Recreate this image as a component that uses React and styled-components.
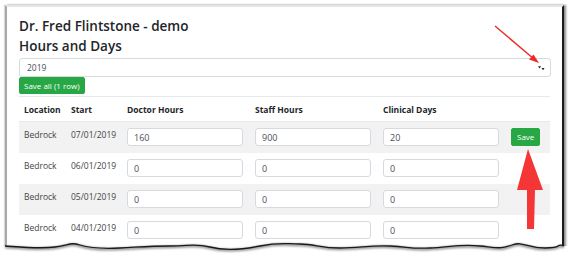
import styled, { createGlobalStyle } from "styled-components";

const GlobalStyle = createGlobalStyle`
  html, body {
    margin: 0;
    padding: 0;
    background: #fff;
  }
  body {
    font-family: "Open Sans", "Liberation Sans", sans-serif;
    color: #212529;
  }
`;

const rows = [
  { location: "Bedrock", start: "07/01/2019", doctor: "160", staff: "900", days: "20", dirty: true },
  { location: "Bedrock", start: "06/01/2019", doctor: "0", staff: "0", days: "0" },
  { location: "Bedrock", start: "05/01/2019", doctor: "0", staff: "0", days: "0" },
  { location: "Bedrock", start: "04/01/2019", doctor: "0", staff: "0", days: "0" },
];

const App = () => {
  return (
    <Page>
      <GlobalStyle />
      <Frame>
        <Title>
          Dr. Fred Flintstone - demo
          <br />
          Hours and Days
        </Title>

        <YearSelect>
          <span>2019</span>
          <SelectCaret viewBox="0 0 8 6">
            <path d="M0 1h3.5L1.75 3.5z M4 3h3.5L5.75 5.5z" fill="#222" />
          </SelectCaret>
        </YearSelect>

        <GreenButton $small>Save all (1 row)</GreenButton>

        <Table>
          <thead>
            <tr>
              <Th $w={47}>Location</Th>
              <Th $w={56}>Start</Th>
              <Th $w={128}>Doctor Hours</Th>
              <Th $w={128}>Staff Hours</Th>
              <Th $w={128}>Clinical Days</Th>
              <Th $w={44}></Th>
            </tr>
          </thead>
          <tbody>
            {rows.map((r, i) => (
              <Row key={r.start} $striped={i % 2 === 0}>
                <Td>{r.location}</Td>
                <Td>{r.start}</Td>
                <Td><NumInput defaultValue={r.doctor} /></Td>
                <Td><NumInput defaultValue={r.staff} /></Td>
                <Td><NumInput defaultValue={r.days} /></Td>
                <Td>{r.dirty && <GreenButton>Save</GreenButton>}</Td>
              </Row>
            ))}
          </tbody>
        </Table>
      </Frame>

      <Overlay viewBox="0 0 574 260">
        <defs>
          <filter id="blur" x="-5%" y="-50%" width="110%" height="200%">
            <feGaussianBlur stdDeviation="1.2" />
          </filter>
        </defs>
        {/* torn bottom edge */}
        <path
          d="M0 246 L5 246 C20 247 40 249 55 247 S70 242 80 245 S100 249 120 248 S150 246 170 246 S195 243 210 247 S240 250 260 246 S285 244 300 244 S320 248 340 248 S370 245 390 246 S410 249 430 248 S460 244 480 246 S500 249 512 245 S525 248 545 248 S555 243 564 246 L574 246 L574 260 L0 260 Z"
          fill="#fff"
        />
        <path
          d="M5 247 C20 248 40 250 55 248 S70 243 80 246 S100 250 120 249 S150 247 170 247 S195 244 210 248 S240 251 260 247 S285 245 300 245 S320 249 340 249 S370 246 390 247 S410 250 430 249 S460 245 480 247 S500 250 512 246 S525 249 545 249 S555 244 564 247"
          fill="none"
          stroke="#000"
          strokeOpacity="0.45"
          strokeWidth="2.5"
          filter="url(#blur)"
        />
        <path
          d="M5 246 C20 247 40 249 55 247 S70 242 80 245 S100 249 120 248 S150 246 170 246 S195 243 210 247 S240 250 260 246 S285 244 300 244 S320 248 340 248 S370 245 390 246 S410 249 430 248 S460 244 480 246 S500 249 512 245 S525 248 545 248 S555 243 564 246"
          fill="none"
          stroke="#1a1a1a"
          strokeWidth="1.3"
        />

        {/* thin arrow to the select caret */}
        <line x1="495" y1="26" x2="534" y2="59" stroke="#ec2a2a" strokeWidth="1.4" />
        <path d="M539 63 L529 59.5 L533.5 54.5 Z" fill="#ec2a2a" />

        {/* big arrow to the save button */}
        <path d="M528 149 L543 190 L535 190 L534 229 L527 229 L527 190 L517 190 Z" fill="#f43636" />
      </Overlay>
    </Page>
  );
};

const Page = styled.div`
  position: relative;
  width: 574px;
  height: 260px;
  overflow: hidden;
  padding: 5px 0 0 5px;
  box-sizing: border-box;
`;

const Frame = styled.div`
  box-sizing: border-box;
  width: 559px;
  height: 248px;
  overflow: hidden;
  padding: 9px 11px 0 12px;
  background: #fff;
  border-top: 2px solid #e6e6e6;
  border-left: 2px solid #a8a8a8;
  border-right: 2px solid #1c1c1c;
  box-shadow: 2px 0 2px rgba(0, 0, 0, 0.45), -1px 0 1px rgba(0, 0, 0, 0.15);
`;

const Title = styled.h1`
  margin: 0;
  font-size: 13.5px;
  font-weight: 600;
  line-height: 20px;
  color: #212529;
`;

const YearSelect = styled.div`
  box-sizing: border-box;
  margin-top: 2px;
  height: 19px;
  display: flex;
  align-items: center;
  justify-content: space-between;
  padding: 0 5px 0 7px;
  border: 1px solid #d6dadf;
  border-radius: 3px;
  font-size: 8.5px;
  color: #495057;
`;

const SelectCaret = styled.svg`
  width: 7px;
  height: 6px;
`;

const GreenButton = styled.button`
  box-sizing: border-box;
  display: block;
  height: ${(p) => (p.$small ? "17px" : "18px")};
  padding: 0 ${(p) => (p.$small ? "4px" : "5px")};
  border: 1px solid #28a745;
  border-radius: 2px;
  background: #28a745;
  color: #fff;
  font-family: inherit;
  font-size: 8px;
  line-height: 1;
  cursor: pointer;
`;

const Table = styled.table`
  width: 531px;
  margin-top: 2px;
  border-collapse: collapse;
  table-layout: fixed;
  font-size: 8.5px;
`;

const Th = styled.th`
  width: ${(p) => p.$w}px;
  box-sizing: border-box;
  height: 25px;
  padding: 0 5px;
  text-align: left;
  font-weight: 700;
  color: #212529;
  border-top: 1px solid #e7eaed;
  border-bottom: 1px solid #e7eaed;
  vertical-align: middle;
`;

const Row = styled.tr`
  background: ${(p) => (p.$striped ? "#f2f2f2" : "#fff")};
`;

const Td = styled.td`
  height: 18px;
  padding: 6px 7px 7px 5px;
  vertical-align: top;
  line-height: 13px;
  color: #444;
`;

const NumInput = styled.input`
  box-sizing: border-box;
  display: block;
  width: 116px;
  height: 18px;
  padding: 0 6px;
  border: 1px solid #d6dadf;
  border-radius: 3px;
  background: #fff;
  font-family: inherit;
  font-size: 9px;
  color: #495057;
  outline: none;
`;

const Overlay = styled.svg`
  position: absolute;
  left: 0;
  top: 0;
  width: 574px;
  height: 260px;
  pointer-events: none;
`;

export default App;
